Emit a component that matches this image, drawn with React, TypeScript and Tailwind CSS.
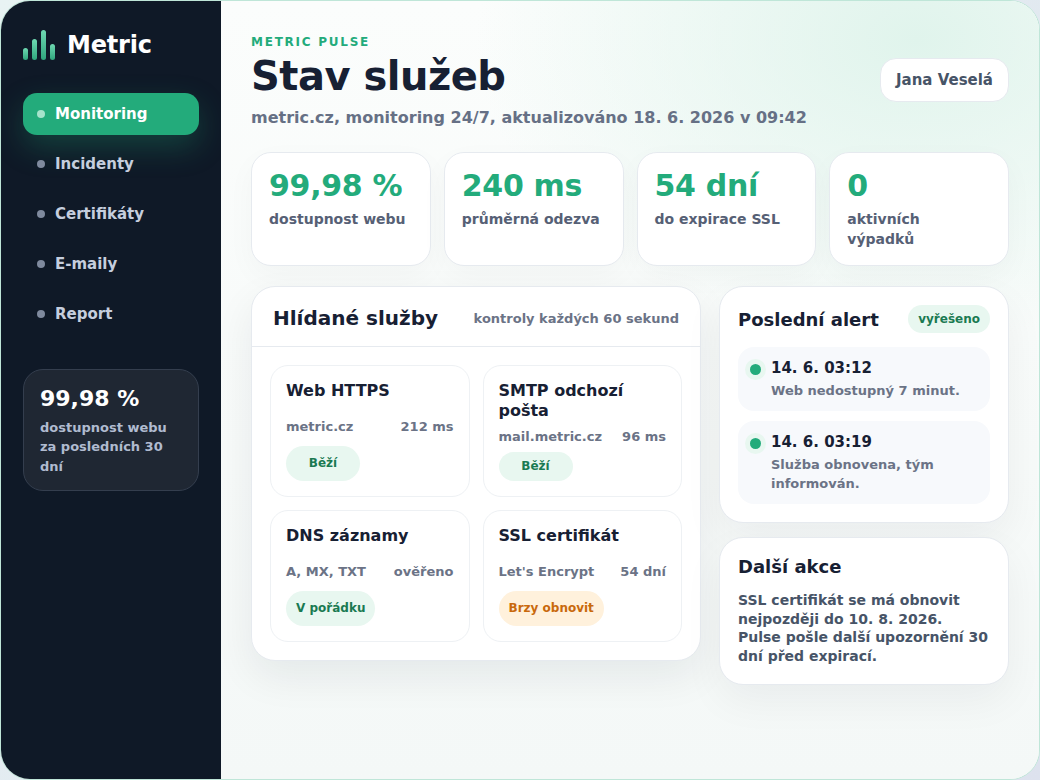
const nav = ["Monitoring", "Incidenty", "Certifikáty", "E-maily", "Report"];
const stats = [
  ["99,98 %", "dostupnost webu"],
  ["240 ms", "průměrná odezva"],
  ["54 dní", "do expirace SSL"],
  ["0", "aktivních výpadků"],
];
const services = [
  { t: "Web HTTPS", a: "metric.cz", b: "212 ms", s: "Běží", c: "bg-[#e8f7f0] text-[#1a7a52]" },
  { t: "SMTP odchozí pošta", a: "mail.metric.cz", b: "96 ms", s: "Běží", c: "bg-[#e8f7f0] text-[#1a7a52]" },
  { t: "DNS záznamy", a: "A, MX, TXT", b: "ověřeno", s: "V pořádku", c: "bg-[#e8f7f0] text-[#1a7a52]" },
  { t: "SSL certifikát", a: "Let's Encrypt", b: "54 dní", s: "Brzy obnovit", c: "bg-[#fff1dc] text-[#c9690c]" },
];
const alerts = [
  ["14. 6. 03:12", "Web nedostupný 7 minut."],
  ["14. 6. 03:19", "Služba obnovena, tým informován."],
];

export default function App() {
  return (
    <div className="w-[1040px] h-[780px] bg-[linear-gradient(135deg,#e8f3f3,#dde2ee)] font-['DejaVu_Sans',sans-serif] font-bold overflow-hidden">
      <div className="w-full h-full flex rounded-[30px] border border-[#bfe6d8] overflow-hidden bg-[#f5f9f8]">
        <aside className="w-[220px] shrink-0 bg-[#0f1927] px-[22px] pt-[27px] flex flex-col">
          <div className="flex items-center gap-[11px] h-[34px]">
            <svg width="33" height="32" viewBox="0 0 33 32">
              <defs>
                <linearGradient id="g" x1="0" y1="0" x2="0" y2="1">
                  <stop offset="0" stopColor="#6fd9b2" />
                  <stop offset="1" stopColor="#2fa67d" />
                </linearGradient>
              </defs>
              <rect x="0" y="19" width="5" height="12" rx="2.5" fill="url(#g)" />
              <rect x="9" y="10" width="5" height="21" rx="2.5" fill="url(#g)" />
              <rect x="18" y="1" width="5" height="30" rx="2.5" fill="url(#g)" />
              <rect x="27" y="15" width="5" height="16" rx="2.5" fill="url(#g)" />
            </svg>
            <span className="text-white text-[24px] leading-none tracking-[-0.2px]">Metric</span>
          </div>
          <nav className="mt-[31px] flex flex-col gap-2">
            {nav.map((n, i) => (
              <div
                key={n}
                className={
                  "h-[42px] rounded-[14px] flex items-center gap-[10px] px-[14px] text-[15px] " +
                  (i === 0
                    ? "bg-[#23ab7b] text-white shadow-[0_12px_30px_rgba(34,168,120,0.28)]"
                    : "text-[#c5cede]")
                }
              >
                <span className={"w-2 h-2 rounded-full " + (i === 0 ? "bg-[#a5e3cb]" : "bg-[#7f8a9e]")} />
                {n}
              </div>
            ))}
          </nav>
          <div className="mt-[34px] h-[122px] rounded-[20px] border border-[#343e4e] bg-[#1f2733] px-4 pt-[16px]">
            <div className="text-white text-[22px] leading-[26px]">99,98 %</div>
            <div className="mt-[5.5px] text-[#b0bbd0] text-[13px] leading-[19.5px]">dostupnost webu za posledních 30 dní</div>
          </div>
        </aside>
        <main className="flex-1 px-[30px] pt-[33px] bg-[radial-gradient(ellipse_440px_300px_at_85%_5%,#e0f4ec,rgba(224,244,236,0)),linear-gradient(180deg,#fbfdfc,#f4f8f7)]">
          <header className="flex justify-between items-start h-[118px]">
            <div>
              <div className="text-[12px] tracking-[1.75px] leading-[16px] text-[#23ab7b]">METRIC PULSE</div>
              <h1 className="text-[40px] tracking-[-0.5px] leading-[50px] mt-[1px] text-[#172033]">Stav služeb</h1>
              <div className="text-[16px] leading-[24px] mt-[5px] text-[#667085]">metric.cz, monitoring 24/7, aktualizováno 18. 6. 2026 v 09:42</div>
            </div>
            <div className="mt-[24px] h-[44px] px-[15px] flex items-center rounded-[16px] bg-white border border-[#e6eaef] text-[#475467] text-[15px]">Jana Veselá</div>
          </header>
          <section className="grid grid-cols-4 gap-[13px] h-[114px]">
            {stats.map(([v, l]) => (
              <div key={v} className="rounded-[20px] bg-white border border-[#e6eaef] px-[17px] pt-[14px] shadow-[0_10px_30px_rgba(15,23,42,0.03)]">
                <div className="text-[30px] tracking-[-0.3px] leading-[38px] text-[#23ab7b]">{v}</div>
                <div className="mt-[4px] text-[14px] leading-[20px] text-[#566075]">{l}</div>
              </div>
            ))}
          </section>
          <section className="mt-5 flex gap-[18px] items-start">
            <div className="w-[450px] rounded-[24px] bg-white border border-[#e6eaef] shadow-[0_16px_40px_rgba(15,23,42,0.07)]">
              <div className="h-[60px] px-[21px] pt-[3px] flex items-center justify-between border-b border-[#e6eaef]">
                <span className="text-[20px] text-[#172033]">Hlídané služby</span>
                <span className="mt-[2px] text-[13px] text-[#6b7386]">kontroly každých 60 sekund</span>
              </div>
              <div className="grid grid-cols-2 auto-rows-fr gap-[13px] p-[18px]">
                {services.map((s) => (
                  <div key={s.t} className="rounded-[18px] border border-[#eef1f4] bg-white px-[15px] py-[15px] grid gap-[7px]">
                    <div className="text-[16px] leading-[19.5px] text-[#172033]">{s.t}</div>
                    <div className="mt-[2px] flex justify-between items-center text-[13px] leading-[16px] text-[#6b7386]">
                      <span>{s.a}</span>
                      <span>{s.b}</span>
                    </div>
                    <div className={"justify-self-start rounded-full px-[10px] py-[6px] leading-[17px] min-w-[74px] flex items-center justify-center text-[12px] " + s.c}>{s.s}</div>
                  </div>
                ))}
              </div>
            </div>
            <div className="flex-1 flex flex-col gap-[14px]">
              <div className="h-[237px] rounded-[24px] bg-white border border-[#e6eaef] p-[18px] shadow-[0_16px_40px_rgba(15,23,42,0.05)]">
                <div className="flex items-center justify-between">
                  <span className="text-[18px] text-[#172033]">Poslední alert</span>
                  <span className="h-7 px-[10px] flex items-center rounded-full bg-[#e8f7f0] text-[#1a7a52] text-[12px]">vyřešeno</span>
                </div>
                <div className="mt-[14px] flex flex-col gap-[10px]">
                  {alerts.map(([t, d]) => (
                    <div key={t} className="rounded-[16px] bg-[#f7f9fc] pl-[12px] pr-[10px] pt-[11px] pb-[10px] flex gap-[10px]">
                      <span className="mt-[6px] w-[11px] h-[11px] rounded-full bg-[#23ab7b] shadow-[0_0_0_5px_#e8f7f0] shrink-0" />
                      <div>
                        <div className="text-[15px] leading-[20px] text-[#172033]">{t}</div>
                        <div className="mt-[3px] text-[13px] leading-[19.5px] text-[#6b7386]">{d}</div>
                      </div>
                    </div>
                  ))}
                </div>
              </div>
              <div className="h-[148px] rounded-[24px] bg-white border border-[#e6eaef] px-[18px] pt-[17px] shadow-[0_16px_40px_rgba(15,23,42,0.05)]">
                <div className="text-[18px] leading-[24px] text-[#172033]">Další akce</div>
                <div className="mt-[12px] text-[14px] leading-[18.7px] text-[#475467]">SSL certifikát se má obnovit nejpozději do 10. 8. 2026. Pulse pošle další upozornění 30 dní před expirací.</div>
              </div>
            </div>
          </section>
        </main>
      </div>
    </div>
  );
}
